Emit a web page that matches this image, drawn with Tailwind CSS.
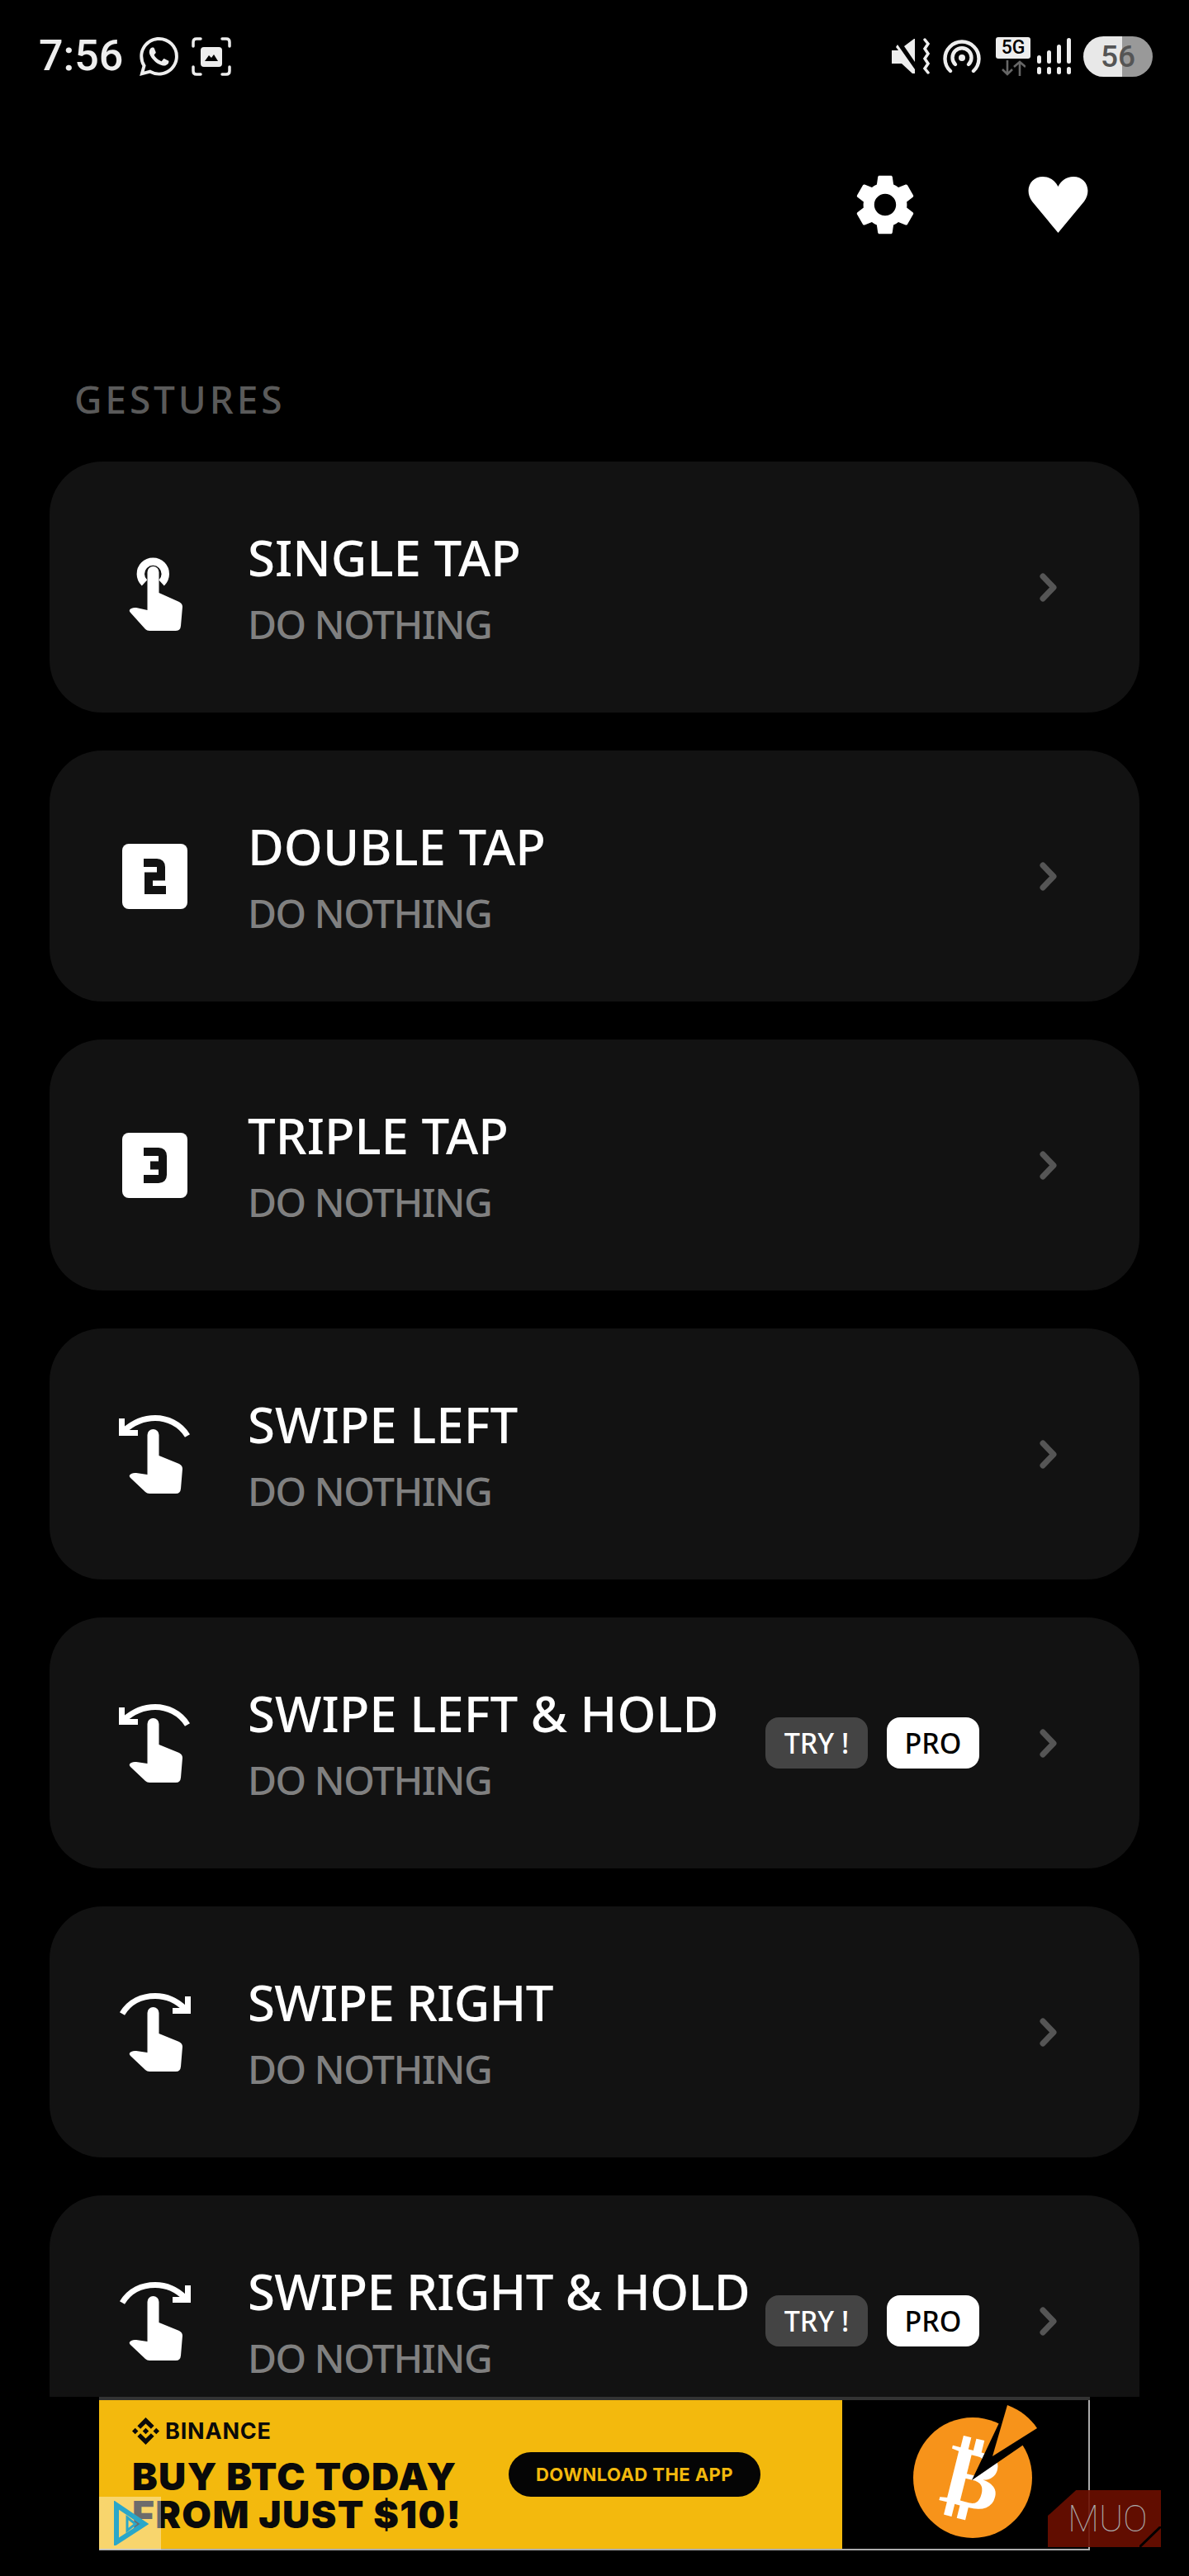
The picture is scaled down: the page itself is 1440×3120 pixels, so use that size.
<!DOCTYPE html>
<html lang="en">
<head>
  <meta charset="UTF-8" />
  <meta name="viewport" content="width=device-width, initial-scale=1.0"/>
  <title>Gestures</title>
  <script src="https://cdn.jsdelivr.net/npm/@tailwindcss/browser@4"></script>
</head>
<body class="bg-black text-white font-['Noto_Sans',sans-serif]">
  <div class="relative flex flex-col w-[1440px] h-[3120px] overflow-hidden bg-black">

    <!-- status bar -->
    <div class="flex items-center justify-between h-[136px] pl-[47px] pr-[44px] shrink-0 text-[#eeeeee]">
      <div class="flex items-center">
        <span class="w-[105px] font-['Roboto',sans-serif] font-medium text-[52px] leading-none">7:56</span>
        <svg class="w-[47px] h-[47px] ml-[17px] fill-current" viewBox="0 0 24 24"><path d="M17.472 14.382c-.297-.149-1.758-.867-2.03-.967-.273-.099-.471-.148-.67.15-.197.297-.767.966-.94 1.164-.173.199-.347.223-.644.075-.297-.15-1.255-.463-2.39-1.475-.883-.788-1.48-1.761-1.653-2.059-.173-.297-.018-.458.13-.606.134-.133.298-.347.446-.52.149-.174.198-.298.298-.497.099-.198.05-.371-.025-.52-.075-.149-.669-1.612-.916-2.207-.242-.579-.487-.5-.669-.51-.173-.008-.371-.01-.57-.01-.198 0-.52.074-.792.372-.272.297-1.04 1.016-1.04 2.479 0 1.462 1.065 2.875 1.213 3.074.149.198 2.096 3.2 5.077 4.487.709.306 1.262.489 1.694.625.712.227 1.36.195 1.871.118.571-.085 1.758-.719 2.006-1.413.248-.694.248-1.289.173-1.413-.074-.124-.272-.198-.57-.347m-5.421 7.403h-.004a9.87 9.87 0 01-5.031-1.378l-.361-.214-3.741.982.998-3.648-.235-.374a9.86 9.86 0 01-1.51-5.26c.001-5.45 4.436-9.884 9.888-9.884 2.64 0 5.122 1.03 6.988 2.898a9.825 9.825 0 012.893 6.994c-.003 5.45-4.437 9.884-9.885 9.884m8.413-18.297A11.815 11.815 0 0012.05 0C5.495 0 .16 5.335.157 11.892c0 2.096.547 4.142 1.588 5.945L.057 24l6.305-1.654a11.882 11.882 0 005.683 1.448h.005c6.554 0 11.89-5.335 11.893-11.893a11.821 11.821 0 00-3.48-8.413z"/></svg>
        <svg class="w-[48px] h-[47px] ml-[16px]" viewBox="0 0 48 47" fill="none">
          <path d="M2 11V6q0-4 4-4h5M37 2h5q4 0 4 4v5M46 36v5q0 4-4 4h-5M11 45H6q-4 0-4-4v-5" stroke="#eeeeee" stroke-width="3.5" stroke-linecap="round"/>
          <rect x="11" y="12" width="26" height="24" rx="4" fill="#eeeeee"/>
          <path d="M16 29l5-7 3 3 3-4 5 8z" fill="#000"/>
        </svg>
      </div>
      <div class="flex items-center">
        <!-- mute + vibrate -->
        <svg class="w-[46px] h-[44px]" viewBox="0 0 46 44" fill="#eeeeee">
          <path d="M0 15h8L5 11l2-3 21 30v5h-3L12 31H0z"/>
          <path d="M27 1h1v28L15 10z"/>
          <path d="M40 2l4 5-4 6 4 6-4 6 4 6-4 6 4 5" fill="none" stroke="#eeeeee" stroke-width="3.5" stroke-linecap="round"/>
        </svg>
        <!-- hotspot -->
        <svg class="w-[46px] h-[42px] ml-[16px]" viewBox="0 0 46 42" fill="none" stroke="#eeeeee" stroke-width="4.4" stroke-linecap="round">
          <path d="M9 39A20.500 20.500 0 1 1 37 39"/>
          <path d="M15 31A11.500 11.500 0 1 1 31 31"/>
          <circle cx="23" cy="23" r="4" fill="#eeeeee" stroke="none"/>
        </svg>
        <!-- 5G -->
        <div class="flex flex-col items-center w-[42px] ml-[18px]">
          <span class="flex items-center justify-center w-[42px] h-[26px] rounded-[3px] bg-[#eeeeee] text-black font-['Roboto',sans-serif] font-medium text-[23px] leading-none">5G</span>
          <svg class="w-[30px] h-[19px] mt-[2px]" viewBox="0 0 30 19" fill="none" stroke="#666666" stroke-width="2.6">
            <path d="M8 0v17M2 11l6 6 6-6M23 19V2M16 8l7-6 7 6"/>
          </svg>
        </div>
        <!-- signal -->
        <svg class="w-[42px] h-[44px] ml-[8px]" viewBox="0 0 42 44" fill="#eeeeee">
          <rect x="0" y="21" width="5" height="10" rx="2.5"/><rect x="0" y="35" width="5" height="9" rx="2.5"/>
          <rect x="12" y="15" width="5" height="16" rx="2.5"/><rect x="12" y="35" width="5" height="9" rx="2.5"/>
          <rect x="24" y="8" width="5" height="23" rx="2.5"/><rect x="24" y="35" width="5" height="9" rx="2.5"/>
          <rect x="36" y="0" width="5" height="31" rx="2.5"/><rect x="36" y="35" width="5" height="9" rx="2.5"/>
        </svg>
        <!-- battery -->
        <div class="relative flex items-center justify-center w-[84px] h-[49px] ml-[14px] rounded-full overflow-hidden bg-[linear-gradient(90deg,#e8e8e8_56%,#999999_56%)] text-[#555555] font-['Roboto',sans-serif] font-medium text-[37px] leading-none">56</div>
      </div>
    </div>

    <!-- top actions -->
    <div class="flex items-center justify-end h-[72px] mt-[76px] pr-[121px] shrink-0">
      <svg class="w-[88px] h-[88px] shrink-0" viewBox="0 0 24 24" fill="#fff"><path d="M19.14 12.94c.04-.3.06-.61.06-.94 0-.32-.02-.64-.07-.94l2.03-1.58c.18-.14.23-.41.12-.61l-1.92-3.32c-.12-.22-.37-.29-.59-.22l-2.39.96c-.5-.38-1.03-.7-1.62-.94l-.36-2.54c-.04-.24-.24-.41-.48-.41h-3.84c-.24 0-.43.17-.47.41l-.36 2.54c-.59.24-1.13.57-1.62.94l-2.39-.96c-.22-.08-.47 0-.59.22L2.74 8.87c-.12.21-.08.47.12.61l2.03 1.58c-.05.3-.09.63-.09.94s.02.64.07.94l-2.03 1.58c-.18.14-.23.41-.12.61l1.92 3.32c.12.22.37.29.59.22l2.39-.96c.5.38 1.03.7 1.62.94l.36 2.54c.05.24.24.41.48.41h3.84c.24 0 .44-.17.47-.41l.36-2.54c.59-.24 1.13-.56 1.62-.94l2.39.96c.22.08.47 0 .59-.22l1.92-3.32c.12-.22.07-.47-.12-.61l-2.01-1.58zM12 15.6c-1.98 0-3.6-1.62-3.6-3.6s1.62-3.6 3.6-3.6 3.6 1.62 3.6 3.6-1.62 3.6-3.6 3.6z"/></svg>
      <svg class="w-[75px] h-[68px] ml-[128px] shrink-0" viewBox="0 0 75 68" fill="#fff"><path d="M37.5 68L6 30C-4 16 4 0 19 0c9 0 15 5 18.5 12C41 5 47 0 56 0c15 0 23 16 13 30z"/></svg>
    </div>

    <h2 class="mt-[179px] ml-[90px] h-[40px] leading-[40px] text-[46px] font-medium tracking-[0.085em] text-[#5a5a5a] shrink-0">GESTURES</h2>

    <!-- gesture list -->
    <main class="flex flex-col gap-[46px] mt-[56px] px-[60px] flex-1 min-h-0 overflow-hidden">

      <div class="flex items-center h-[304px] shrink-0 rounded-[64px] bg-[#121212] pl-[60px] pr-[100px]">
        <svg class="w-[120px] h-[120px] shrink-0" viewBox="0 0 120 120" fill="#fff">
          <path d="M55 55A15 15 0 1 1 75.6 55" fill="none" stroke="#fff" stroke-width="9.4"/>
          <path d="M58.5 42a7 7 0 0 1 14 0V67L97 78q4 2 4 6L99 107q-.5 6-6 6H61q-3 0-5-2L38 91q-3-3 1-5q3-1.5 6-1L58.5 88z"/>
        </svg>
        <div class="ml-[60px] flex-1 min-w-0">
          <div class="text-[60px] leading-[90px] font-medium">SINGLE TAP</div>
          <div class="text-[48px] leading-[72px] font-medium tracking-[-0.032em] text-[#808080]">DO NOTHING</div>
        </div>
        <svg class="w-[21px] h-[35px] shrink-0" viewBox="0 0 21 35" fill="none"><path d="M4 4l13 13.500L4 31" stroke="#555555" stroke-width="7" stroke-linecap="round" stroke-linejoin="round"/></svg>
      </div>

      <div class="flex items-center h-[304px] shrink-0 rounded-[64px] bg-[#121212] pl-[60px] pr-[100px]">
        <svg class="w-[120px] h-[120px] shrink-0" viewBox="0 0 120 120" fill="none">
          <rect x="28" y="21" width="79" height="79" rx="8" fill="#fff"/>
          <path d="M54 44H70q5 0 5 5V60.500H60V77H81" stroke="#121212" stroke-width="10"/>
        </svg>
        <div class="ml-[60px] flex-1 min-w-0">
          <div class="text-[60px] leading-[90px] font-medium">DOUBLE TAP</div>
          <div class="text-[48px] leading-[72px] font-medium tracking-[-0.032em] text-[#808080]">DO NOTHING</div>
        </div>
        <svg class="w-[21px] h-[35px] shrink-0" viewBox="0 0 21 35" fill="none"><path d="M4 4l13 13.500L4 31" stroke="#555555" stroke-width="7" stroke-linecap="round" stroke-linejoin="round"/></svg>
      </div>

      <div class="flex items-center h-[304px] shrink-0 rounded-[64px] bg-[#121212] pl-[60px] pr-[100px]">
        <svg class="w-[120px] h-[120px] shrink-0" viewBox="0 0 120 120" fill="none">
          <rect x="28" y="21" width="79" height="79" rx="8" fill="#fff"/>
          <path d="M54 44H72q5 0 5 5V72q0 5-5 5H54M62 60.500H77" stroke="#121212" stroke-width="10"/>
        </svg>
        <div class="ml-[60px] flex-1 min-w-0">
          <div class="text-[60px] leading-[90px] font-medium">TRIPLE TAP</div>
          <div class="text-[48px] leading-[72px] font-medium tracking-[-0.032em] text-[#808080]">DO NOTHING</div>
        </div>
        <svg class="w-[21px] h-[35px] shrink-0" viewBox="0 0 21 35" fill="none"><path d="M4 4l13 13.500L4 31" stroke="#555555" stroke-width="7" stroke-linecap="round" stroke-linejoin="round"/></svg>
      </div>

      <div class="flex items-center h-[304px] shrink-0 rounded-[64px] bg-[#121212] pl-[60px] pr-[100px]">
        <svg class="w-[120px] h-[120px] shrink-0" viewBox="0 0 120 120" fill="#fff">
          <path d="M107 38C98 23 82 16.500 68 16.500C52 16.500 40 23 30 32M27.500 17V34.500H47" fill="none" stroke="#fff" stroke-width="7"/>
          <path d="M58.500 37a7 7 0 0 1 14 0V62L97 72q4 2 4 6L99 102q-.5 6-6 6H61q-3 0-5-2L38 89q-3-3 1-5q3-1.500 6-1L58.500 85z"/>
        </svg>
        <div class="ml-[60px] flex-1 min-w-0">
          <div class="text-[60px] leading-[90px] font-medium">SWIPE LEFT</div>
          <div class="text-[48px] leading-[72px] font-medium tracking-[-0.032em] text-[#808080]">DO NOTHING</div>
        </div>
        <svg class="w-[21px] h-[35px] shrink-0" viewBox="0 0 21 35" fill="none"><path d="M4 4l13 13.500L4 31" stroke="#555555" stroke-width="7" stroke-linecap="round" stroke-linejoin="round"/></svg>
      </div>

      <div class="flex items-center h-[304px] shrink-0 rounded-[64px] bg-[#121212] pl-[60px] pr-[100px]">
        <svg class="w-[120px] h-[120px] shrink-0" viewBox="0 0 120 120" fill="#fff">
          <path d="M107 38C98 23 82 16.500 68 16.500C52 16.500 40 23 30 32M27.500 17V34.500H47" fill="none" stroke="#fff" stroke-width="7"/>
          <path d="M58.500 37a7 7 0 0 1 14 0V62L97 72q4 2 4 6L99 102q-.5 6-6 6H61q-3 0-5-2L38 89q-3-3 1-5q3-1.500 6-1L58.500 85z"/>
        </svg>
        <div class="ml-[60px] flex-1 min-w-0">
          <div class="text-[60px] leading-[90px] font-medium whitespace-nowrap">SWIPE LEFT &amp; HOLD</div>
          <div class="text-[48px] leading-[72px] font-medium tracking-[-0.032em] text-[#808080]">DO NOTHING</div>
        </div>
        <span class="flex items-center justify-center w-[124px] h-[62px] rounded-[16px] bg-[#444444] text-[34px] font-medium shrink-0">TRY !</span>
        <span class="flex items-center justify-center w-[112px] h-[62px] ml-[23px] mr-[73px] rounded-[16px] bg-white text-black text-[34px] font-medium shrink-0">PRO</span>
        <svg class="w-[21px] h-[35px] shrink-0" viewBox="0 0 21 35" fill="none"><path d="M4 4l13 13.500L4 31" stroke="#555555" stroke-width="7" stroke-linecap="round" stroke-linejoin="round"/></svg>
      </div>

      <div class="flex items-center h-[304px] shrink-0 rounded-[64px] bg-[#121212] pl-[60px] pr-[100px]">
        <svg class="w-[120px] h-[120px] shrink-0" viewBox="0 0 120 120" fill="#fff">
          <path d="M28 38C37 23 52 16.500 68 16.500C82 16.500 95 23 104 32M107.500 17V34.500H89" fill="none" stroke="#fff" stroke-width="7"/>
          <path d="M58.500 37a7 7 0 0 1 14 0V62L97 72q4 2 4 6L99 102q-.5 6-6 6H61q-3 0-5-2L38 89q-3-3 1-5q3-1.500 6-1L58.500 85z"/>
        </svg>
        <div class="ml-[60px] flex-1 min-w-0">
          <div class="text-[60px] leading-[90px] font-medium tracking-[-0.012em]">SWIPE RIGHT</div>
          <div class="text-[48px] leading-[72px] font-medium tracking-[-0.032em] text-[#808080]">DO NOTHING</div>
        </div>
        <svg class="w-[21px] h-[35px] shrink-0" viewBox="0 0 21 35" fill="none"><path d="M4 4l13 13.500L4 31" stroke="#555555" stroke-width="7" stroke-linecap="round" stroke-linejoin="round"/></svg>
      </div>

      <div class="flex items-center h-[304px] shrink-0 rounded-[64px] bg-[#121212] pl-[60px] pr-[100px]">
        <svg class="w-[120px] h-[120px] shrink-0" viewBox="0 0 120 120" fill="#fff">
          <path d="M28 38C37 23 52 16.500 68 16.500C82 16.500 95 23 104 32M107.500 17V34.500H89" fill="none" stroke="#fff" stroke-width="7"/>
          <path d="M58.500 37a7 7 0 0 1 14 0V62L97 72q4 2 4 6L99 102q-.5 6-6 6H61q-3 0-5-2L38 89q-3-3 1-5q3-1.500 6-1L58.500 85z"/>
        </svg>
        <div class="ml-[60px] flex-1 min-w-0">
          <div class="text-[60px] leading-[90px] font-medium whitespace-nowrap tracking-[-0.012em]">SWIPE RIGHT &amp; HOLD</div>
          <div class="text-[48px] leading-[72px] font-medium tracking-[-0.032em] text-[#808080]">DO NOTHING</div>
        </div>
        <span class="flex items-center justify-center w-[124px] h-[62px] rounded-[16px] bg-[#444444] text-[34px] font-medium shrink-0">TRY !</span>
        <span class="flex items-center justify-center w-[112px] h-[62px] ml-[23px] mr-[73px] rounded-[16px] bg-white text-black text-[34px] font-medium shrink-0">PRO</span>
        <svg class="w-[21px] h-[35px] shrink-0" viewBox="0 0 21 35" fill="none"><path d="M4 4l13 13.500L4 31" stroke="#555555" stroke-width="7" stroke-linecap="round" stroke-linejoin="round"/></svg>
      </div>
    </main>

    <!-- ad banner -->
    <footer class="relative h-[217px] pl-[120px] shrink-0 bg-black">
      <div class="flex w-[1200px] h-[186px] border-t-[4px] border-t-[#333333] border-b-[2px] border-b-[#aaaaaa]">
        <div class="flex items-center w-[900px] pl-[40px] bg-[#f3b90d] text-[#0a0a0a] font-['Inter',sans-serif]">
          <div class="w-[456px] shrink-0">
            <div class="flex items-center h-[36px]">
              <svg class="w-[33px] h-[33px] fill-current" viewBox="0 0 24 24"><path d="M16.624 13.9202l2.7175 2.7154-7.353 7.353-7.353-7.352 2.7175-2.7164 4.6355 4.6595 4.6356-4.6595zm4.6366-4.6366L24 12l-2.7154 2.7164L18.5682 12l2.6924-2.7164zm-9.272.001l2.7163 2.6914-2.7164 2.7174v-.001L9.2721 12l2.7164-2.7154zm-9.2722-.001L5.4088 12l-2.6914 2.6924L0 12l2.7164-2.7164zM11.9885.0115l7.353 7.329-2.7174 2.7154-4.6356-4.6356-4.6355 4.6595-2.7174-2.7154 7.353-7.353z"/></svg>
              <span class="ml-[7px] text-[27px] leading-none font-bold tracking-[0.03em]">BINANCE</span>
            </div>
            <div class="mt-[14px] text-[46px] leading-[46px] font-black whitespace-nowrap tracking-[0.03em]">BUY BTC TODAY<br>FROM JUST $10!</div>
          </div>
          <div class="flex items-center justify-center w-[305px] h-[54px] rounded-full bg-[#050505] text-[#f3b90d] text-[22px] font-bold tracking-[0.02em] whitespace-nowrap shrink-0">DOWNLOAD THE APP</div>
        </div>
        <div class="w-[300px] border-r-[2px] border-r-[#aaaaaa] bg-black">
          <svg class="w-[298px] h-[180px]" viewBox="0 0 298 180">
            <ellipse cx="158" cy="94" rx="72" ry="73" fill="#f7931a"/>
            <text x="158" y="130" text-anchor="middle" transform="rotate(14 158 94)" font-family="DejaVu Sans" font-weight="700" font-size="104" fill="#fff">₿</text>
            <path d="M157 97L205 -4L298 -4L298 20L240 40z" fill="#000"/>
            <path d="M200 6C216 12 228 22 236 34L182 68z" fill="#f7931a"/>
          </svg>
        </div>
      </div>
      <!-- watermarks lying over the banner -->
      <div class="absolute left-[120px] top-[121px] flex items-center justify-center w-[75px] h-[64px] bg-white/40">
        <svg class="w-[44px] h-[54px]" viewBox="0 0 44 54" fill="none" stroke="#2aa7c9" stroke-width="6"><path d="M5 5L39 28L5 50z"/><path d="M18 20L28 28L18 36z" stroke-width="3"/></svg>
      </div>
      <div class="absolute left-[1269px] top-[113px] flex items-center justify-center w-[137px] h-[69px] pl-[8px] [clip-path:polygon(25%_0,100%_0,100%_100%,0_100%,0_45%)] bg-[#6b0e00]/90 text-[#aaaaaa] font-['Roboto',sans-serif] font-thin text-[44px] leading-none">MUO</div>
      <svg class="absolute left-[1380px] top-[157px] w-[26px] h-[25px]" viewBox="0 0 26 25" fill="none"><path d="M0 25L26 0" stroke="#000" stroke-width="3"/></svg>
    </footer>
  </div>
</body>
</html>
